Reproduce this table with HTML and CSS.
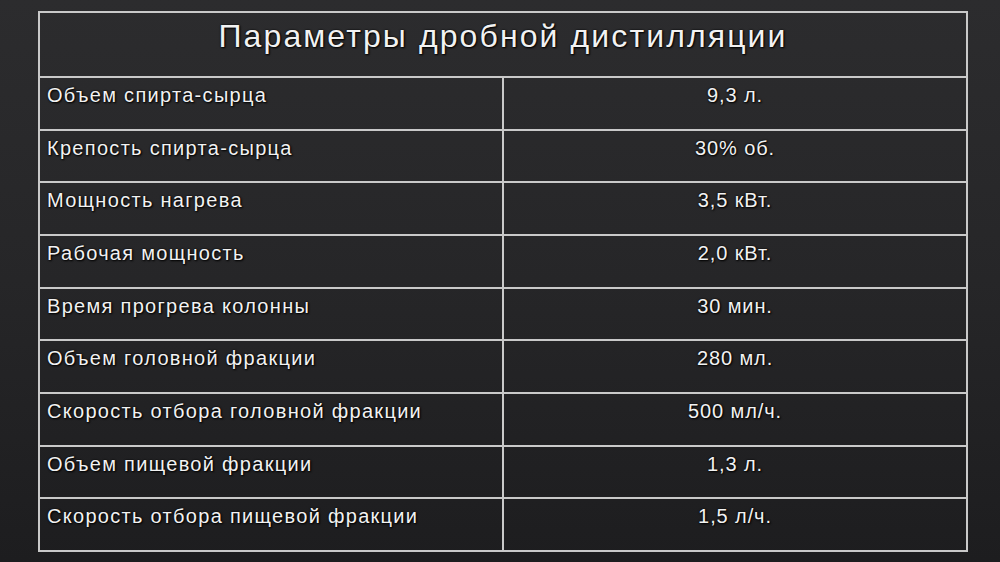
FILE: index.html
```html
<!DOCTYPE html>
<html lang="ru">
<head>
<meta charset="utf-8">
<title>Параметры дробной дистилляции</title>
<link rel="stylesheet" href="styles.css">
</head>
<body>
<div class="slide">
  <table class="params">
    <thead>
      <tr class="title-row"><th colspan="2">Параметры дробной дистилляции</th></tr>
    </thead>
    <tbody>
      <tr><td class="name">Объем спирта-сырца</td><td class="val">9,3 л.</td></tr>
      <tr><td class="name">Крепость спирта-сырца</td><td class="val">30% об.</td></tr>
      <tr><td class="name">Мощность нагрева</td><td class="val">3,5 кВт.</td></tr>
      <tr><td class="name">Рабочая мощность</td><td class="val">2,0 кВт.</td></tr>
      <tr><td class="name">Время прогрева колонны</td><td class="val">30 мин.</td></tr>
      <tr><td class="name">Объем головной фракции</td><td class="val">280 мл.</td></tr>
      <tr><td class="name">Скорость отбора головной фракции</td><td class="val">500 мл/ч.</td></tr>
      <tr><td class="name">Объем пищевой фракции</td><td class="val">1,3 л.</td></tr>
      <tr><td class="name">Скорость отбора пищевой фракции</td><td class="val">1,5 л/ч.</td></tr>
    </tbody>
  </table>
</div>
</body>
</html>
```

FILE: styles.css
```css
html, body {
  margin: 0;
  padding: 0;
}
body {
  width: 1000px;
  height: 562px;
  overflow: hidden;
  background: linear-gradient(180deg, #2c2c2e 0%, #262628 50%, #1d1d1f 100%);
  font-family: "Liberation Sans", Arial, sans-serif;
  color: #f2f2f2;
}
.slide {
  padding: 11px 0 0 38px;
}
.params {
  width: 930px;
  height: 541px;
  border-collapse: collapse;
  table-layout: fixed;
}
.params th,
.params td {
  border: 2px solid #c9c9c9;
  vertical-align: top;
  text-shadow: 1px 1px 2px #000, 0 0 2px #000;
}
.title-row th {
  height: 59px;
  font-size: 32px;
  font-weight: normal;
  letter-spacing: 2.1px;
  padding: 4px 0 0 0;
  text-align: center;
  line-height: 38px;
}
.params td {
  font-size: 20px;
  letter-spacing: 1.3px;
  line-height: 22px;
  padding: 6px 7px 0 7px;
}
.params td.name {
  width: 449px;
}
.params td.val {
  text-align: center;
  letter-spacing: 0.9px;
}
```
